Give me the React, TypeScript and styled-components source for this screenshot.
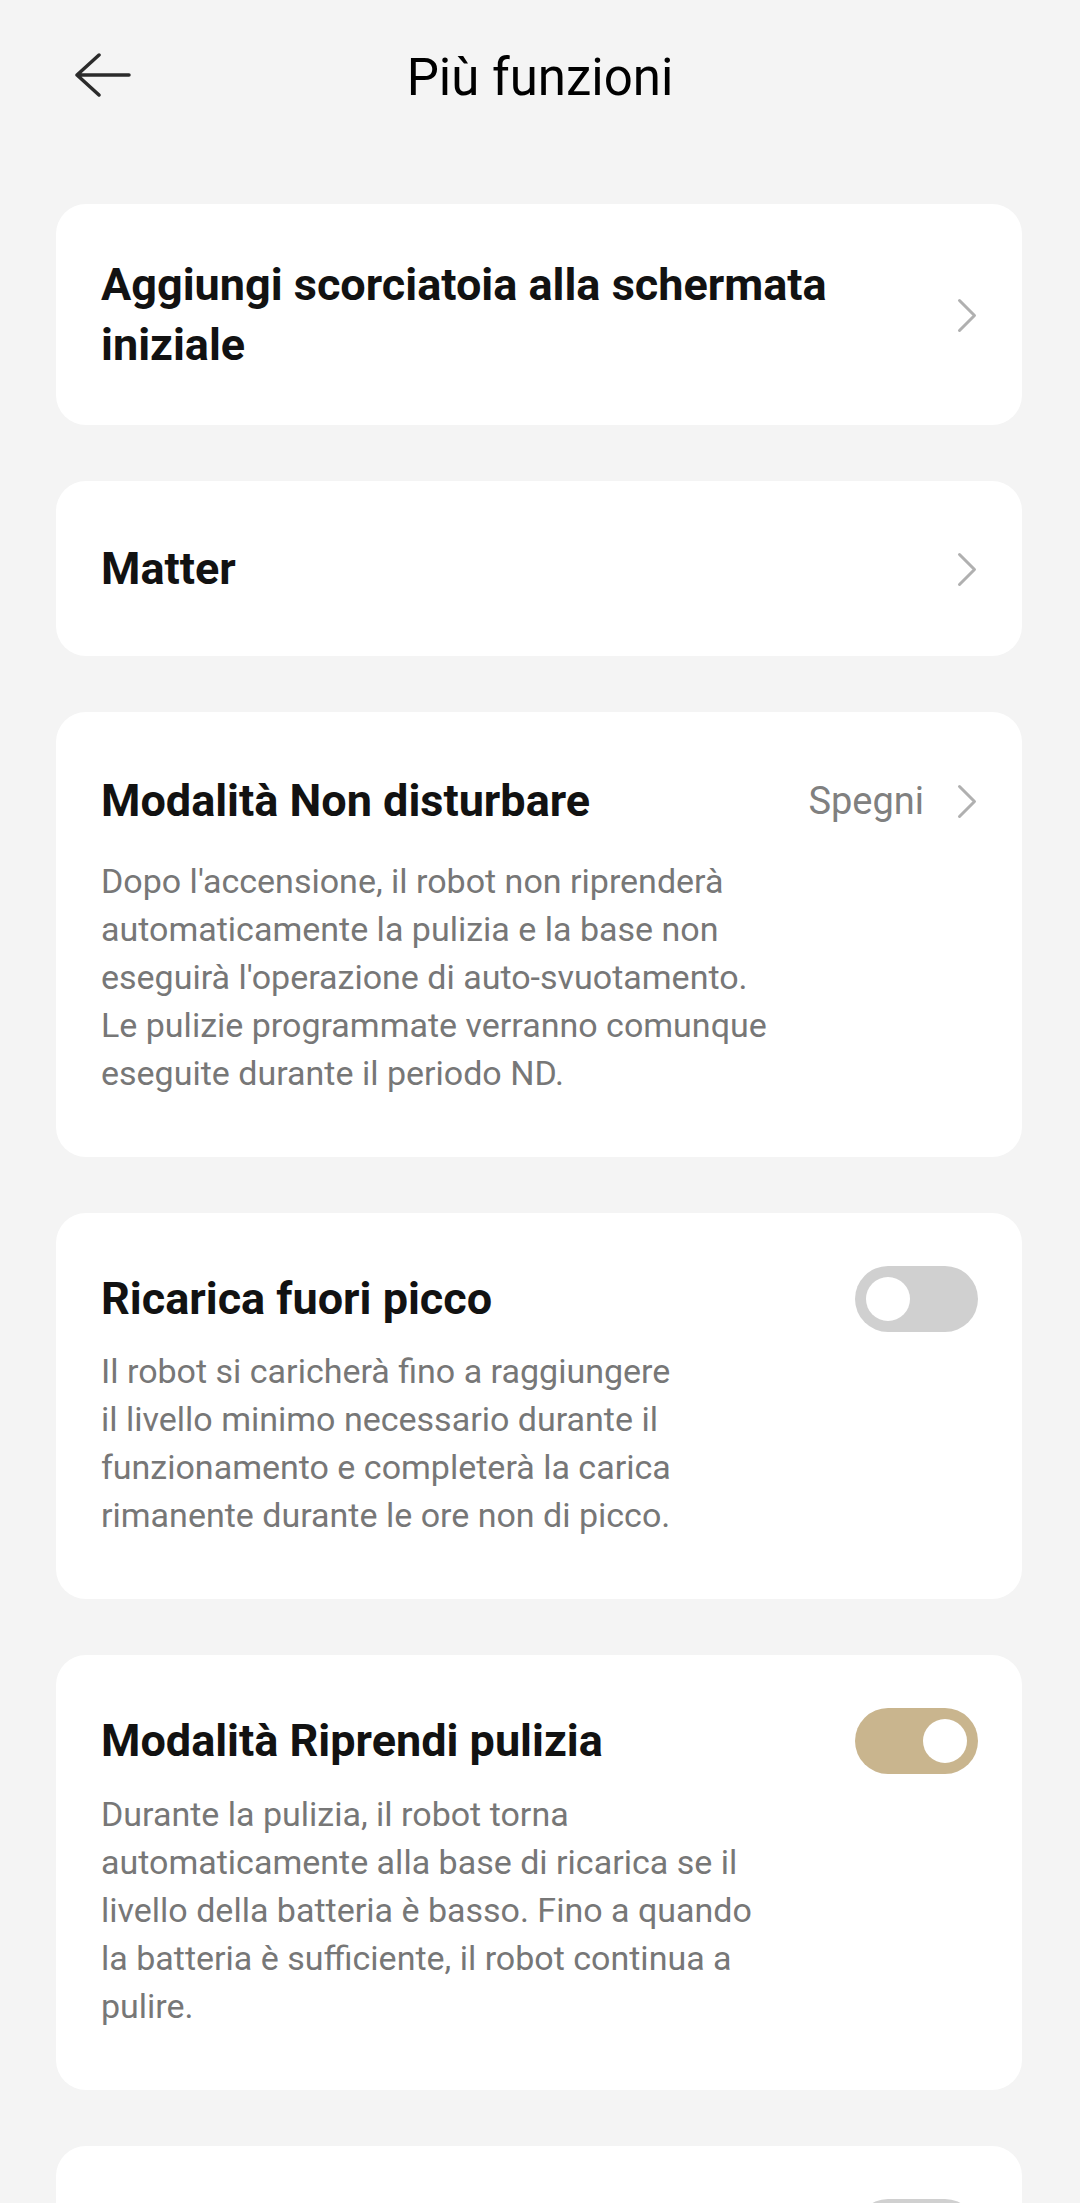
import React from "react";
import styled, { createGlobalStyle } from "styled-components";

const GlobalStyle = createGlobalStyle`
  html, body {
    margin: 0;
    padding: 0;
    background: #f4f4f4;
  }
  body {
    font-family: Roboto, "Noto Sans", "Liberation Sans", sans-serif;
    -webkit-font-smoothing: antialiased;
  }
  * {
    box-sizing: border-box;
  }
`;

const Page = styled.div`
  width: 1080px;
  min-height: 2203px;
  background: #f4f4f4;
  overflow: hidden;
`;

const Header = styled.header`
  height: 150px;
  display: grid;
  grid-template-columns: 1fr auto 1fr;
  align-items: center;
`;

const BackButton = styled.button`
  justify-self: start;
  margin-left: 75px;
  width: 56px;
  height: 44px;
  padding: 0;
  border: 0;
  background: none;
  display: flex;
  cursor: pointer;
`;

const Title = styled.h1`
  margin: 5px 0 0;
  font-size: 51px;
  font-weight: 400;
  color: #000;
  white-space: nowrap;
`;

const List = styled.main`
  display: flex;
  flex-direction: column;
  gap: 56px;
  padding: 54px 58px 0 56px;
`;

const Card = styled.section<{ $top?: number }>`
  background: #fff;
  border-radius: 30px;
  padding: ${(p) => p.$top ?? 50}px 45px 60px;
`;

const NavCard = styled.section`
  background: #fff;
  border-radius: 30px;
  min-height: 175px;
  padding: 51px 45px 50px;
  display: flex;
  align-items: center;
  gap: 40px;
  cursor: pointer;
`;

const Row = styled.div`
  display: flex;
  align-items: center;
  min-height: 72px;
`;

const CardTitle = styled.h2`
  flex: 1;
  margin: 0;
  font-size: 45px;
  line-height: 60px;
  font-weight: 700;
  color: #121212;
`;

const Value = styled.span`
  font-size: 38px;
  color: #808080;
  margin-right: 33px;
`;

const Desc = styled.p<{ $gap: number }>`
  margin: ${(p) => p.$gap}px 0 0;
  font-size: 34px;
  line-height: 48px;
  color: #777;
`;

const Track = styled.button<{ $on: boolean }>`
  width: 123px;
  height: 66px;
  flex: none;
  margin-right: -1px;
  border: 0;
  border-radius: 33px;
  padding: 0 11px;
  display: flex;
  align-items: center;
  justify-content: ${(p) => (p.$on ? "flex-end" : "flex-start")};
  background: ${(p) => (p.$on ? "#c9b58e" : "#d0d0d0")};
  cursor: pointer;
`;

const Knob = styled.span`
  width: 44px;
  height: 44px;
  border-radius: 50%;
  background: #fff;
`;

const BackArrow = () => (
  <svg width="56" height="44" viewBox="0 0 56 44" fill="none">
    <path
      d="M2 22H54M24 2L2 22L24 42"
      stroke="#2b2b2b"
      strokeWidth="3.5"
      strokeLinecap="round"
      strokeLinejoin="round"
    />
  </svg>
);

const Chevron = () => (
  <svg width="20" height="35" viewBox="0 0 20 35" fill="none" style={{ flex: "none" }}>
    <path
      d="M2.5 2.5L17.5 17.5L2.5 32.5"
      stroke="#b0b0b0"
      strokeWidth="3"
      strokeLinecap="round"
      strokeLinejoin="round"
    />
  </svg>
);

const Toggle = ({ on }: { on: boolean }) => (
  <Track $on={on} role="switch" aria-checked={on}>
    <Knob />
  </Track>
);

const App = () => {
  return (
    <Page>
      <GlobalStyle />
      <Header>
        <BackButton aria-label="Indietro">
          <BackArrow />
        </BackButton>
        <Title>Più funzioni</Title>
      </Header>

      <List>
        <NavCard>
          <CardTitle>Aggiungi scorciatoia alla schermata iniziale</CardTitle>
          <Chevron />
        </NavCard>

        <NavCard>
          <CardTitle>Matter</CardTitle>
          <Chevron />
        </NavCard>

        <Card $top={53}>
          <Row>
            <CardTitle>Modalità Non disturbare</CardTitle>
            <Value>Spegni</Value>
            <Chevron />
          </Row>
          <Desc $gap={20}>
            Dopo l'accensione, il robot non riprenderà
            <br />
            automaticamente la pulizia e la base non
            <br />
            eseguirà l'operazione di auto-svuotamento.
            <br />
            Le pulizie programmate verranno comunque
            <br />
            eseguite durante il periodo ND.
          </Desc>
        </Card>

        <Card>
          <Row>
            <CardTitle>Ricarica fuori picco</CardTitle>
            <Toggle on={false} />
          </Row>
          <Desc $gap={12}>
            Il robot si caricherà fino a raggiungere
            <br />
            il livello minimo necessario durante il
            <br />
            funzionamento e completerà la carica
            <br />
            rimanente durante le ore non di picco.
          </Desc>
        </Card>

        <Card>
          <Row>
            <CardTitle>Modalità Riprendi pulizia</CardTitle>
            <Toggle on={true} />
          </Row>
          <Desc $gap={13}>
            Durante la pulizia, il robot torna
            <br />
            automaticamente alla base di ricarica se il
            <br />
            livello della batteria è basso. Fino a quando
            <br />
            la batteria è sufficiente, il robot continua a
            <br />
            pulire.
          </Desc>
        </Card>

        <Card>
          <Row>
            <CardTitle />
            <Toggle on={false} />
          </Row>
        </Card>
      </List>
    </Page>
  );
};

export default App;
